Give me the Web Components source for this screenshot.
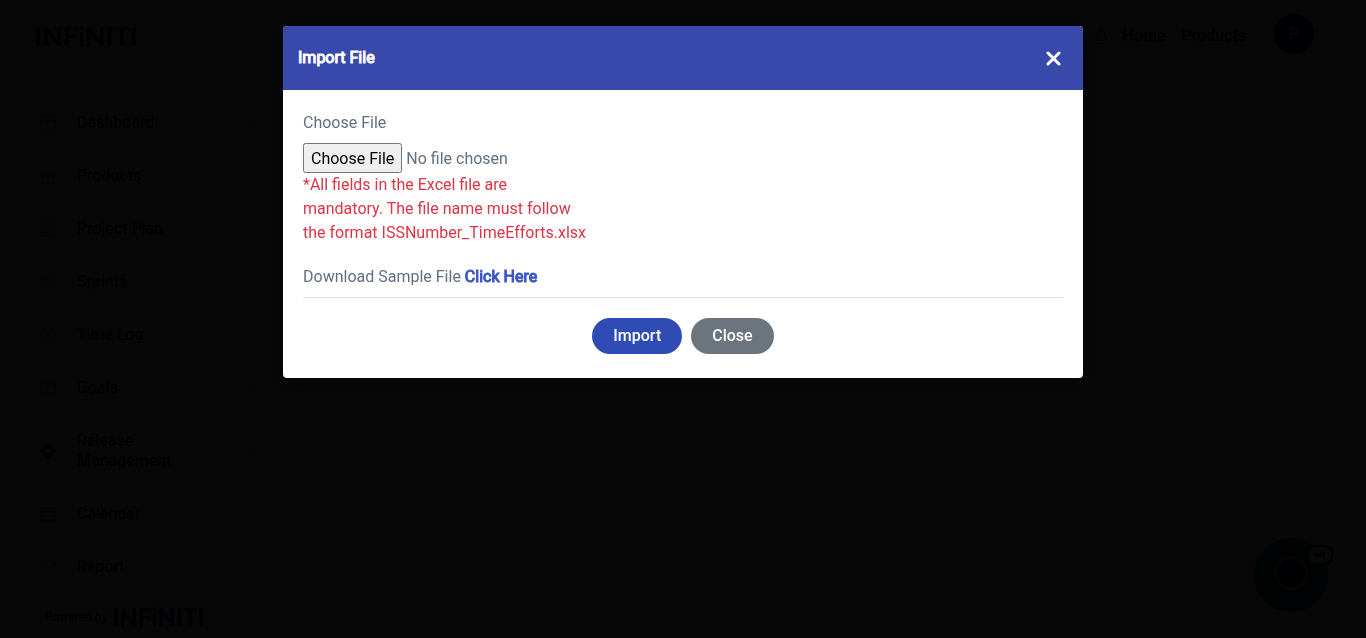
<!DOCTYPE html>
<html lang="en">
<head>
<meta charset="utf-8">
<title>Infiniti</title>
<style>
  body {
    margin: 0;
    font-family: Roboto, sans-serif;
    font-size: 16px;
    line-height: 24px;
    background: #fff;
    color: #000;
  }
</style>
</head>
<body>
<app-shell>
  <app-header slot="header"></app-header>
  <app-sidebar slot="sidebar">
    <nav-item icon="grid" arrow>Dashboard</nav-item>
    <nav-item icon="gift">Products</nav-item>
    <nav-item icon="plan">Project Plan</nav-item>
    <nav-item icon="sprint">Sprints</nav-item>
    <nav-item icon="clock">Time Log</nav-item>
    <nav-item icon="grid" arrow>Goals</nav-item>
    <nav-item icon="diamond" arrow>Release Management</nav-item>
    <nav-item icon="calendar">Calendar</nav-item>
    <nav-item icon="trend" arrow>Report</nav-item>
  </app-sidebar>
</app-shell>
<chat-bot></chat-bot>
<modal-dialog heading="Import File">
  <import-form></import-form>
</modal-dialog>

<script>
const ICONS = {
  grid: '<path d="M1 1h14v14H1zM1 6h14M6 6v9"/>',
  gift: '<path d="M1 5h14v3H1zM2 8v7h12V8M8 5v10M8 5C3 5 4 0 8 5c4-5 5 0 0 0"/>',
  plan: '<path d="M1 1h14v14H1zM4 5h5M4 8h8M4 11h6"/>',
  sprint: '<circle cx="8" cy="9" r="5"/><path d="M8 1v3M8 9l2-3M3 3l2 2"/>',
  clock: '<circle cx="8" cy="8" r="7"/><path d="M8 4v4l3 2"/>',
  diamond: '<path d="M8 1l7 7-7 7-7-7zM4 8l4-4 4 4-4 4z" stroke="#404040" stroke-width="2"/>',
  calendar: '<path d="M1 2h14v13H1zM1 6h14M1 10h14M4 0v4M12 0v4"/>',
  trend: '<path d="M1 12l5-5 3 3 6-7M11 3h4v4"/>'
};

function icon(name) {
  return `<svg width="16" height="16" viewBox="0 0 16 16" fill="none" stroke="currentColor" aria-hidden="true">${ICONS[name]}</svg>`;
}

class AppShell extends HTMLElement {
  constructor() {
    super();
    this.attachShadow({ mode: 'open' }).innerHTML = `
      <style>
        :host { display: flex; flex-direction: column; height: 100vh; overflow: hidden; }
        .main { flex: 1; display: flex; min-height: 0; }
      </style>
      <slot name="header"></slot>
      <div class="main"><slot name="sidebar"></slot></div>
    `;
  }
}

class BrandLogo extends HTMLElement {
  constructor() {
    super();
    this.attachShadow({ mode: 'open' }).innerHTML = `
      <style>
        :host { display: block; font-family: Lato, sans-serif; font-weight: 700; font-size: var(--logo-size, 27px); line-height: 32px; color: #000070; }
      </style>
      <span>INFiNITI</span>
    `;
  }
}

class AppHeader extends HTMLElement {
  constructor() {
    super();
    this.attachShadow({ mode: 'open' }).innerHTML = `
      <style>
        :host { display: flex; align-items: center; height: 76px; padding: 0 52px 0 34px; border-bottom: 4px solid #e8e8e8; box-sizing: border-box; }
        nav { margin-left: auto; display: flex; align-items: center; gap: 16px; }
        a { color: #000; text-decoration: none; font-weight: 500; }
        button { border: 0; padding: 0; background: none; font: inherit; color: #000; }
        .bell { display: flex; margin-right: -3px; }
        .avatar { width: 40px; height: 40px; margin: 0 0 4px 12px; border-radius: 50%; background: #000080; color: #fff; font-weight: 500; }
      </style>
      <brand-logo></brand-logo>
      <nav>
        <button class="bell" aria-label="Notifications">
          <svg width="16" height="18" viewBox="0 0 16 18" fill="none" stroke="currentColor"><path d="M2 13h12l-2-3V7a4 4 0 0 0-8 0v3zM8 1v2M6 15a2 2 0 0 0 4 0"/></svg>
        </button>
        <a href="#">Home</a>
        <a href="#">Products</a>
        <button class="avatar">P</button>
      </nav>
    `;
  }
}

class AppSidebar extends HTMLElement {
  constructor() {
    super();
    this.attachShadow({ mode: 'open' }).innerHTML = `
      <style>
        :host { display: flex; flex-direction: column; width: 265px; padding-top: 37px; box-sizing: border-box; }
        nav { display: flex; flex-direction: column; gap: 33px; padding: 0 0 0 40px; }
        footer { display: flex; align-items: center; gap: 5px; margin-top: 24px; padding-left: 45px; font-size: 12px; --logo-size: 24px; }
      </style>
      <nav><slot></slot></nav>
      <footer><span>Powered by</span><brand-logo></brand-logo></footer>
    `;
  }
}

class NavItem extends HTMLElement {
  constructor() {
    super();
    this.attachShadow({ mode: 'open' });
  }

  connectedCallback() {
    const arrow = this.hasAttribute('arrow')
      ? '<svg class="arrow" width="12" height="12" viewBox="0 0 12 12" fill="none" stroke="currentColor"><path d="M2 4l4 4 4-4"/></svg>'
      : '';
    this.shadowRoot.innerHTML = `
      <style>
        :host { display: block; }
        a { display: flex; align-items: center; gap: 21px; padding-right: 4px; color: #000; line-height: 20px; text-decoration: none; }
        svg { flex: none; color: #707070; }
        .label { width: 110px; }
        .arrow { margin-left: auto; color: #707070; }
      </style>
      <a href="#">${icon(this.getAttribute('icon'))}<span class="label"><slot></slot></span>${arrow}</a>
    `;
  }
}

class ChatBot extends HTMLElement {
  constructor() {
    super();
    this.attachShadow({ mode: 'open' }).innerHTML = `
      <style>
        :host { position: fixed; right: 31px; bottom: 25px; }
        button { display: block; border: 0; padding: 0; background: none; }
        svg { display: block; }
      </style>
      <button aria-label="Open chat">
        <svg width="82" height="76" viewBox="0 0 82 76">
          <circle cx="38" cy="38" r="37" fill="#007070"/>
          <circle cx="38" cy="36" r="16" fill="#000048" stroke="#fff" stroke-width="2"/>
          <circle cx="38" cy="36" r="18" fill="none" stroke="#000" stroke-width="2"/>
          <circle cx="36" cy="14" r="3" fill="#c00000"/>
          <path d="M36 17v3" stroke="#000" stroke-width="2"/>
          <rect x="54" y="9" width="26" height="18" rx="9" fill="#e0e0e0" stroke="#000" stroke-width="2"/>
          <path d="M61 18h12" stroke="#000" stroke-width="3" stroke-dasharray="3 1"/>
        </svg>
      </button>
    `;
  }
}

class ModalDialog extends HTMLElement {
  constructor() {
    super();
    this.attachShadow({ mode: 'open' });
  }

  connectedCallback() {
    this.shadowRoot.innerHTML = `
      <style>
        :host { position: fixed; inset: 0; display: block; padding: 26px 16px; background: rgba(0, 0, 0, .972); }
        section { max-width: 800px; margin: 0 auto; border-radius: 4px; overflow: hidden; background: #fff; box-shadow: 0 4px 20px rgba(4, 6, 14, .8); }
        header { display: flex; align-items: center; justify-content: space-between; height: 64px; padding: 0 20px 0 15px; background: #3949ab; color: #fff; }
        h2 { margin: 0; font-size: 16px; line-height: 24px; font-weight: 400; -webkit-text-stroke: 1px; }
        button { display: flex; padding: 2px; border: 0; background: none; color: #fff; }
        .body { padding: 21px 20px 24px; }
      </style>
      <section role="dialog" aria-modal="true" aria-labelledby="heading">
        <header>
          <h2 id="heading">${this.getAttribute('heading')}</h2>
          <button aria-label="Close dialog">
            <svg width="16" height="16" viewBox="0 0 16 16" stroke="currentColor" stroke-width="3" stroke-linecap="round"><path d="M3 3l11 11M14 3L3 14"/></svg>
          </button>
        </header>
        <div class="body"><slot></slot></div>
      </section>
    `;
  }
}

class ImportForm extends HTMLElement {
  constructor() {
    super();
    this.attachShadow({ mode: 'open' }).innerHTML = `
      <style>
        :host { display: block; color: #607080; }
        label { display: block; margin-bottom: 8px; }
        input { display: block; width: 300px; max-width: 100%; font: inherit; color: inherit; }
        input::file-selector-button { height: 30px; font: inherit; }
        .note { margin: 0 0 20px; max-width: 285px; color: #dc3545; }
        .sample { margin: 0; padding-bottom: 8px; border-bottom: 1px solid #dfe1e3; }
        a { color: #3a55c4; -webkit-text-stroke: 1px; text-decoration: none; }
        .actions { display: flex; justify-content: center; gap: 9px; margin-top: 20px; }
        button { height: 36px; padding: 0 21px; border: 0; border-radius: 18px; font: inherit; font-weight: 500; color: #fff; background: #2f4cb5; }
        .close { background: #6c757d; }
      </style>
      <form>
        <label for="file">Choose File</label>
        <input type="file" id="file">
        <p class="note">*All fields in the Excel file are mandatory. The file name must follow the format ISSNumber_TimeEfforts.xlsx</p>
        <p class="sample">Download Sample File <a href="#">Click Here</a></p>
        <div class="actions">
          <button type="button">Import</button>
          <button type="button" class="close">Close</button>
        </div>
      </form>
    `;
  }
}

customElements.define('app-shell', AppShell);
customElements.define('brand-logo', BrandLogo);
customElements.define('app-header', AppHeader);
customElements.define('app-sidebar', AppSidebar);
customElements.define('nav-item', NavItem);
customElements.define('chat-bot', ChatBot);
customElements.define('modal-dialog', ModalDialog);
customElements.define('import-form', ImportForm);
</script>
</body>
</html>
